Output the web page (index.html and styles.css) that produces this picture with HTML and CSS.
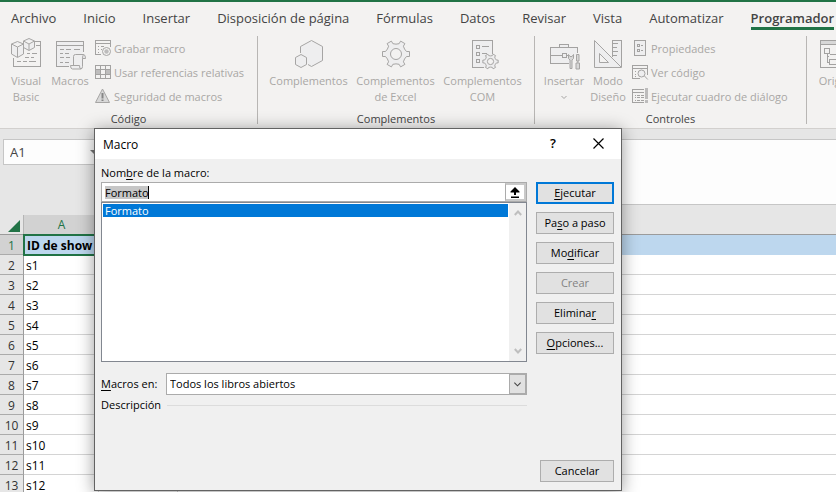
FILE: index.html
```
<!DOCTYPE html>
<html lang="es">
<head>
<meta charset="utf-8">
<title>Macro</title>
<link rel="stylesheet" href="styles.css">
</head>
<body>
<svg class="defs" aria-hidden="true">
  <symbol id="gear" viewBox="-15 -15 30 30">
    <path d="M10.5-2.5L13.5-2.5L13.5 2.5L10.5 2.5Q8.2 4.7 7.4 7.8L8.9 10.4L4.6 12.9L3.1 10.3Q0 9.4-3.1 10.3L-4.6 12.9L-8.9 10.4L-7.4 7.8Q-8.2 4.7-10.5 2.5L-13.5 2.5L-13.5-2.5L-10.5-2.5Q-8.2-4.7-7.4-7.8L-8.9-10.4L-4.6-12.9L-3.1-10.3Q0-9.4 3.1-10.3L4.6-12.9L8.9-10.4L7.4-7.8Q8.2-4.7 10.5-2.5Z" vector-effect="non-scaling-stroke"/>
    <circle r="5.5" fill="#f3f2f1" vector-effect="non-scaling-stroke"/>
  </symbol>
</svg>

<header class="ribbon">
  <nav class="tabs">
    <a href="#">Archivo</a>
    <a href="#">Inicio</a>
    <a href="#">Insertar</a>
    <a href="#">Disposición de página</a>
    <a href="#">Fórmulas</a>
    <a href="#">Datos</a>
    <a href="#">Revisar</a>
    <a href="#">Vista</a>
    <a href="#">Automatizar</a>
    <a href="#" class="active">Programador</a>
  </nav>
  <div class="groups">
    <section class="group code">
      <div class="tools">
        <button class="big" disabled>
          <svg class="icon" viewBox="0 0 32 32"><path class="l" d="M25 4.500H30.500V29.500H3.500V21M26 8.500H30M17 16.500H20M22 16.500H27M15 20.500H19M21 20.500H24M7 24.500H11M13 24.500H17M19 24.500H26"/><path class="c f" d="M7.500 4.500L13.500 7V17L7.500 20.500L1.500 17V7ZM1.500 7L7.500 10L13.500 7M7.500 10V20M19 1.500L24.500 4V10.500L19 13.500L13.500 10.500V4ZM13.500 4L19 7L24.500 4M19 7V13"/></svg>
          <span>Visual<br>Basic</span>
        </button>
        <button class="big" disabled>
          <svg class="icon" viewBox="0 0 32 32"><path class="l f" d="M15 29.500H2.500V4.500H29.500V15"/><path class="l" d="M2.500 8.500H29.500M6 12.500H10M12 12.500H17M20 12.500H26M6 16.500H9M11 16.500H15M6 20.500H10M12 20.500H16M6 25.500H9M11 25.500H15"/><path class="c f" d="M19.500 28.500V19.500Q19.500 17.500 21.500 17.500H29.500Q31.500 17.500 31.500 21.500H28.500V29.500Q28.500 32 26.500 32H18.500Q16.500 32 16.500 28.500H25.500Q25.500 32 27 32M28.500 21.500Q28.500 17.500 30 17.500"/></svg>
          <span>Macros</span>
        </button>
        <div class="stack">
          <button disabled><svg class="mini" viewBox="0 0 16 16"><path class="l" d="M6 14.500H.5V.5H15.500V7M.5 3.500H15.500M3 6.500H4M6 6.500H9M3 9.500H4M6 9.500H7M3 12.500H4"/><circle class="c" cx="11.500" cy="11.500" r="4"/><circle cx="11.500" cy="11.500" r="2.200" class="solid"/></svg>Grabar macro</button>
          <button disabled><svg class="mini" viewBox="0 0 16 16"><path class="solid" d="M1 6H5V10H1ZM11 6H15V10H11Z"/><path class="l" d="M.5 1.500H15.500V14.500H.5ZM5.500 1.500V14.500M10.500 1.500V14.500M.5 5.500H15.500M.5 10.500H15.500"/></svg>Usar referencias relativas</button>
          <button disabled><svg class="mini" viewBox="0 0 16 16"><path class="c g" d="M7.500 1L14.500 14.500H.5Z"/><path class="bang" d="M7.500 5V10.500M7.500 11.500V13"/></svg>Seguridad de macros</button>
        </div>
      </div>
      <h2>Código</h2>
    </section>

    <section class="group addins">
      <div class="tools">
        <button class="big" disabled>
          <svg class="icon" viewBox="0 0 32 32"><path class="c f" d="M7.500 16V9.500L18.500 3.500L29.500 9.500V23.500L18.500 29.500L15 27.500M8 17.500L13.500 20.500V27.500L8 30.500L2.500 27.500V20.500Z"/></svg>
          <span>Complementos</span>
        </button>
        <button class="big" disabled>
          <svg class="icon" viewBox="0 0 32 32"><use class="c f" href="#gear" x="1" y="2" width="30" height="30"/></svg>
          <span>Complementos<br>de Excel</span>
        </button>
        <button class="big" disabled>
          <svg class="icon" viewBox="0 0 32 32"><path class="l f" d="M17 30.500H5.500V3.500H25.500V17"/><path class="l" d="M9.500 8.500H12.500V11.500H9.500ZM9.500 15.500H12.500V18.500H9.500ZM9.500 22.500H12.500V25.500H9.500ZM15 9.500H22M15 16.500H20"/><use class="c f" href="#gear" x="15" y="16" width="17" height="17"/></svg>
          <span>Complementos<br>COM</span>
        </button>
      </div>
      <h2>Complementos</h2>
    </section>

    <section class="group controls">
      <div class="tools">
        <button class="big" disabled>
          <svg class="icon" viewBox="0 0 32 32"><path class="l f" d="M21 26.500H2.500V10.500H29.500V16M11.500 10.500V7.500H20.500V10.500"/><path class="l" d="M2.500 18.500H14M19 18.500H21M14.500 16.500H18.500V20.500H14.500Z"/><path class="c g" d="M20.500 17.500V21.500L22 23V31.500H24V23L25.500 21.500V17.500L24 19.500H22ZM28.500 17.500H31V24H28.500ZM28 26H31.500V32H28ZM29.800 24V26"/></svg>
          <span>Insertar<svg class="chev" viewBox="0 0 8 16"><path class="c" d="M1.500 7L4 9.500L6.500 7"/></svg></span>
        </button>
        <button class="big" disabled>
          <svg class="icon" viewBox="0 0 32 32"><path class="l f" d="M20.500 20V3.500H29.500V30"/><path class="c f" d="M2.500 3.500L29.500 30.500H2.500ZM7.500 16.500V25.500H16.500Z"/><path class="l" d="M21 6.500H26M21 10.500H25M21 14.500H26M21 18.500H25"/></svg>
          <span>Modo<br>Diseño</span>
        </button>
        <div class="stack">
          <button disabled><svg class="mini" viewBox="0 0 16 16"><path class="l f" d="M2.500 .5H13.500V15.500H2.500Z"/><path class="l" d="M5.500 4.500H7.500V6.500H5.500ZM5.500 9.500H7.500V11.500H5.500ZM9 5.500H11M9 10.500H11"/></svg>Propiedades</button>
          <button disabled><svg class="mini" viewBox="0 0 16 16"><path class="l" d="M15.500 11V1.500H.5V14.500H8M.5 4.500H15.500M3 7.500H4M3 10.500H4M3 12.500H4M6 7.500H7"/><path class="c f" d="M12.500 12L15.800 15.500"/><circle class="c f" cx="9.500" cy="9.500" r="3.500"/></svg>Ver código</button>
          <button disabled><svg class="mini" viewBox="0 0 16 16"><path class="l" d="M12 1.500H.5V14.500H12M.5 4.500H12M3 7.500H4M5 7.500H8M9 7.500H12M3 9.500H4M5 9.500H8M9 9.500H12M3 12.500H4M5 12.500H8M9 12.500H12"/><path class="solid" d="M13 0H16V11H13ZM13 12H16V15H13Z"/></svg>Ejecutar cuadro de diálogo</button>
        </div>
      </div>
      <h2>Controles</h2>
    </section>

    <section class="group xml">
      <div class="tools">
        <button class="big" disabled>
          <svg class="icon" viewBox="0 0 32 32"><path class="g" d="M.5 3.500H31V7.500H.5Z"/><path class="l" d="M.5 3.500H31.500V30.500H.5ZM.5 7.500H31.500M4.500 11.500H9.500V16.500H4.500ZM7.500 17V25.500H9M7.500 19.500H9M9.500 17.500H16M9.500 22.500H18V27.500H9.500Z"/></svg>
          <span>Origen</span>
        </button>
      </div>
    </section>
  </div>
</header>

<main class="workbook">
  <div class="formula-row">
    <div class="name-box"><input aria-label="Cuadro de nombres" value="A1"><svg viewBox="0 0 8 5"><path d="M0 0H8L4 4Z"/></svg></div>
    <input class="formula" aria-label="Barra de fórmulas">
  </div>
  <table class="sheet">
    <colgroup><col class="num"><col class="a"><col class="b"><col></colgroup>
    <thead><tr><th class="corner"><svg viewBox="0 0 12 12"><path d="M12 0V12H0Z"/></svg></th><th class="sel">A</th><th></th><th></th></tr></thead>
    <tbody>
      <tr class="first"><th>1</th><td>ID de show</td><td></td><td></td></tr>
      <tr><th>2</th><td>s1</td><td></td><td></td></tr>
      <tr><th>3</th><td>s2</td><td></td><td></td></tr>
      <tr><th>4</th><td>s3</td><td></td><td></td></tr>
      <tr><th>5</th><td>s4</td><td></td><td></td></tr>
      <tr><th>6</th><td>s5</td><td></td><td></td></tr>
      <tr><th>7</th><td>s6</td><td></td><td></td></tr>
      <tr><th>8</th><td>s7</td><td></td><td></td></tr>
      <tr><th>9</th><td>s8</td><td></td><td></td></tr>
      <tr><th>10</th><td>s9</td><td></td><td></td></tr>
      <tr><th>11</th><td>s10</td><td></td><td></td></tr>
      <tr><th>12</th><td>s11</td><td></td><td></td></tr>
      <tr><th>13</th><td>s12</td><td></td><td></td></tr>
    </tbody>
  </table>
</main>

<div class="dialog" role="dialog" aria-labelledby="dlg-title">
  <div class="titlebar">
    <h1 id="dlg-title">Macro</h1>
    <button class="help" aria-label="Ayuda">?</button>
    <button class="close" aria-label="Cerrar"><svg viewBox="0 0 11 11"><path d="M.5 .5L10.500 10.500M10.500 .5L.5 10.500"/></svg></button>
  </div>
  <div class="content">
    <div class="fields">
      <label for="macro-name">Nom<u>b</u>re de la macro:</label>
      <div class="name-field">
        <input id="macro-name" value="Formato">
        <button aria-label="Contraer"><svg viewBox="0 0 10 11"><path d="M5 0L9.500 4.500V5.500H6V8H4V5.500H.5V4.500ZM1 9.500H9V11H1Z"/></svg></button>
      </div>
      <div class="list">
        <ul role="listbox" aria-label="Macros"><li role="option" aria-selected="true">Formato</li></ul>
        <div class="scroll">
          <svg viewBox="0 0 8 6"><path d="M.8 5L4 1.500L7.200 5"/></svg>
          <svg viewBox="0 0 8 6"><path d="M.8 1L4 4.500L7.200 1"/></svg>
        </div>
      </div>
      <div class="where">
        <label for="macros-in"><u>M</u>acros en:</label>
        <div class="combo">
          <select id="macros-in"><option>Todos los libros abiertos</option></select>
          <svg viewBox="0 0 16 20"><path d="M4.500 8.500L8 12L11.500 8.500"/></svg>
        </div>
      </div>
      <div class="description"><span>Descripción</span></div>
    </div>
    <div class="actions">
      <button class="default"><u>E</u>jecutar</button>
      <button>Pa<u>s</u>o a paso</button>
      <button>Mo<u>d</u>ificar</button>
      <button disabled>Crear</button>
      <button>Elimina<u>r</u></button>
      <button><u>O</u>pciones...</button>
    </div>
  </div>
  <div class="footer"><button>Cancelar</button></div>
</div>
</body>
</html>
```
FILE: styles.css
```
* { box-sizing: border-box; }

body {
  margin: 0;
  height: 100vh;
  overflow: hidden;
  position: relative;
  background: #fff;
  font-family: "Open Sans", "Noto Sans", sans-serif;
  font-size: 12px;
  color: #444;
}

button, input, select { font: inherit; color: inherit; margin: 0; }
h1, h2 { margin: 0; font-weight: 400; }
u { text-underline-offset: 2px; text-decoration-skip-ink: none; }
.defs { position: absolute; width: 0; height: 0; }

/* Ribbon */
.ribbon { background: #f3f2f1; border-top: 2px solid #217346; }

.tabs { display: flex; gap: 27px; height: 28px; padding: 6px 0 0 11px; font-size: 13px; }
.tabs a {
  flex: none;
  height: 22px;
  line-height: 20px;
  color: #444;
  text-decoration: none;
  white-space: nowrap;
}
.tabs .active { font-weight: 600; border-bottom: 3px solid #217346; }

.groups { display: flex; height: 98px; padding: 6px 0 0; overflow: hidden; }
.group {
  flex: none;
  display: flex;
  flex-direction: column;
  justify-content: space-between;
  height: 88px;
  border-right: 1px solid #b8b6b4;
}
.code { width: 258px; }
.addins { width: 277px; }
.controls { width: 272px; }
.xml { width: 80px; border: 0; }
.group h2 { font-size: 11px; line-height: 14px; height: 12px; text-align: center; }

.tools { display: flex; padding-left: 7px; font-size: 11px; }
.code .tools { padding-left: 4px; }
.tools button {
  border: 0;
  padding: 0;
  background: none;
  color: #a9a7a5;
  white-space: nowrap;
}
.big {
  display: flex;
  flex-direction: column;
  align-items: center;
  width: 44px;
  line-height: 16px;
}
.tools .big { padding-top: 1px; }
.addins .big { width: 87px; }
.big span { display: block; padding-top: 4px; text-align: center; }
.icon { display: block; flex: none; width: 32px; height: 32px; overflow: visible; }
.chev { display: block; width: 8px; height: 16px; margin: 0 auto; }

.stack { display: flex; flex-direction: column; padding-left: 3px; }
.controls .stack { padding-left: 2px; }
.stack button { display: flex; align-items: center; gap: 3px; height: 24px; }
.mini { flex: none; width: 16px; height: 16px; overflow: visible; }

.icon, .mini, .chev { fill: none; stroke-width: 1; }
.l { stroke: #a3a2a1; shape-rendering: crispEdges; }
.c { stroke: #a6a5a4; }
.f { fill: #eeeeef; }
.g { fill: #d8d8d8; }
.solid { fill: #bdbcbc; }
.bang { stroke: #858585; stroke-width: 2; }

/* Workbook */
.workbook { background: #e6e6e6; border-top: 1px solid #d2d0ce; }
.formula-row { display: flex; align-items: flex-start; gap: 20px; padding: 10px 0 10px 3px; }
.name-box {
  display: flex;
  align-items: center;
  width: 100px;
  height: 26px;
  padding-right: 4px;
  background: #fdfdfd;
  border: 1px solid #c6c6c6;
}
.name-box input { flex: 1; min-width: 0; border: 0; padding: 0 6px; background: none; font-size: 13px; }
.name-box svg { width: 8px; height: 5px; fill: #777; }
.formula { flex: 1; min-width: 0; height: 66px; background: #fdfdfd; border: 1px solid #c6c6c6; border-right: 0; }

.sheet { width: 100%; table-layout: fixed; border-collapse: separate; border-spacing: 0; color: #000; }
.num { width: 24px; }
.a { width: 75px; }
.b { width: 79px; }
.sheet th, .sheet td { height: 20px; padding: 2px 0 0; line-height: 17px; font-weight: 400; white-space: nowrap; }
.sheet thead th { padding: 0; line-height: 19px; border-bottom: 1px solid #9b9b9b; color: #444; }
.sheet thead .sel { background: #d2d2d2; color: #217346; }
.sheet .corner { text-align: right; border-right: 1px solid #b5b5b5; }
.corner svg { display: block; width: 12px; height: 12px; margin: 3px 3px 0 auto; fill: #217346; }
.sheet tbody th {
  background: #e6e6e6;
  border-right: 1px solid #9b9b9b;
  border-bottom: 1px solid #ababab;
  color: #333;
  text-align: center;
}
.sheet td { background: #fff; border-bottom: 1px solid #d4d4d4; padding-left: 2px; }
.sheet td:nth-child(-n+3) { border-right: 1px solid #d4d4d4; }
.sheet .first th { background: #d2d2d2; color: #217346; }
.sheet .first td { background: #bdd7ee; border-color: #bdd7ee; font-weight: 700; }
.sheet .first td:nth-child(2) { outline: 2px solid #217346; outline-offset: -1px; padding-left: 3px; position: relative; }

/* Dialog */
.dialog {
  position: absolute;
  left: 94px;
  top: 128px;
  width: 528px;
  background: #f0f0f0;
  border: 1px solid #626262;
  box-shadow: 0 2px 16px rgba(0, 0, 0, .4);
  font-size: 11px;
  color: #000;
}
.titlebar { display: flex; align-items: center; height: 30px; padding: 0 8px; background: #fff; }
.titlebar h1 { flex: 1; font-size: 12px; }
.titlebar button { display: grid; place-items: center; width: 30px; height: 30px; padding: 0 0 2px; border: 0; background: none; }
.titlebar .help { margin-right: 15px; font-size: 13px; font-weight: 600; }
.close svg { width: 11px; height: 11px; fill: none; stroke: #000; stroke-width: 1.2; }

.content { display: flex; gap: 9px; padding: 6px 7px 0 6px; }
.fields { flex: 1; min-width: 0; }
.fields label { display: block; height: 17px; line-height: 16px; }
.name-field { display: flex; height: 20px; border: 1px solid #ababab; background: #fff; }
.name-field input {
  flex: 1;
  min-width: 0;
  border: 0;
  padding: 0 3px;
  background:
    linear-gradient(#000, #000) 46px 3px / 1px 13px no-repeat,
    linear-gradient(#c6c6c6, #c6c6c6) 3px 3px / 43px 13px no-repeat,
    #fff;
}
.name-field button { display: grid; place-items: center; width: 21px; padding: 0; border: 2px solid #c9c9c9; border-left: 1px solid #ababab; background: #fff; }
.name-field svg { width: 10px; height: 11px; }
.list { display: flex; height: 160px; border: 1px solid #828790; background: #fff; }
.list ul { flex: 1; margin: 0; padding: 1px; list-style: none; }
.list li { height: 13px; line-height: 13px; padding-left: 2px; background: #0078d7; color: #fff; }
.scroll { display: flex; flex-direction: column; justify-content: space-between; align-items: center; width: 17px; padding: 7px 0; background: #f0f0f0; }
.scroll svg { width: 8px; height: 6px; fill: none; stroke: #bfbfbf; stroke-width: 2; }
.where { display: flex; align-items: center; margin-top: 11px; }
.where label { width: 65px; }
.combo { position: relative; flex: 1; height: 22px; }
.combo select { appearance: none; width: 100%; height: 22px; padding: 0 20px 1px 3px; border: 1px solid #ababab; border-radius: 0; background: #fff; }
.combo svg { position: absolute; right: 1px; top: 1px; width: 17px; height: 20px; border: 1px solid #ababab; background: #e1e1e1; fill: none; stroke: #444; stroke-width: 1.2; pointer-events: none; }
.description { display: flex; align-items: center; gap: 6px; margin-top: 2px; line-height: 16px; }
.description::after { content: ""; flex: 1; border-top: 1px solid #dcdcdc; }

.actions { display: flex; flex-direction: column; gap: 8px; width: 78px; padding-top: 17px; }
.actions button, .footer button {
  height: 22px;
  padding: 0 0 2px;
  border: 1px solid #adadad;
  background: #e1e1e1;
}
.actions .default { border: 2px solid #0078d7; }
.actions button:disabled { color: #838383; }
.footer { display: flex; justify-content: flex-end; padding: 47px 7px 8px; }
.footer button { width: 74px; }
```
